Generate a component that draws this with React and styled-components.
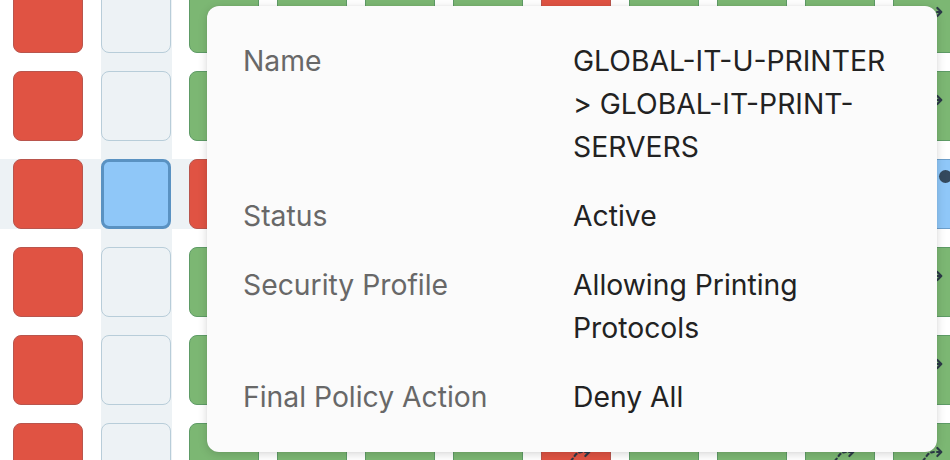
import React from 'react';
import styled, { createGlobalStyle } from 'styled-components';

const GlobalStyle = createGlobalStyle`
  html, body {
    margin: 0;
    padding: 0;
    background: #ffffff;
    overflow: hidden;
  }
  body {
    font-family: Inter, "Noto Sans", "Liberation Sans", sans-serif;
  }
`;

// r = deny, g = allow, e = empty, s = selected, b = highlighted target
// a trailing "+" means the cell carries a flow icon, "*" a marker dot
const matrix = [
  'r e g g g+ g+ r+ g+ g+ g+ g+',
  'r e g g g g r g g g g+',
  'r s r g g g r g g g b*',
  'r e g g g g r g g g g+',
  'r e g g g g r g g g g+',
  'r e g g g g r+ g g g+ g+',
];

const SELECTED_ROW = 2;
const SELECTED_COL = 1;

const details = [
  { label: 'Name', value: 'GLOBAL-IT-U-PRINTER > GLOBAL-IT-PRINT-SERVERS' },
  { label: 'Status', value: 'Active' },
  { label: 'Security Profile', value: 'Allowing Printing Protocols' },
  { label: 'Final Policy Action', value: 'Deny All' },
];

const palette = {
  r: { bg: '#e05343', border: '#b9554d', width: '1px' },
  g: { bg: '#7cb773', border: '#5e9b66', width: '1px' },
  e: { bg: '#edf2f5', border: '#b8cdd9', width: '1.5px' },
  s: { bg: '#8fc7f8', border: '#5a92c2', width: '3px' },
  b: { bg: '#8fc7f8', border: '#6d9fcb', width: '1px' },
};

function parseCell(code) {
  return {
    kind: code[0],
    icon: code.includes('+'),
    dot: code.includes('*'),
  };
}

function FlowArrow() {
  return (
    <svg width="32" height="32" viewBox="0 0 24 24" fill="none" stroke="currentColor"
      strokeWidth="1.6" strokeLinecap="round" strokeLinejoin="round">
      <path d="M3 21 L11 10.5 Q13 7.5 16.5 7.5 H21.5" strokeDasharray="2 2.4" />
      <path d="M19 4.5 l3 3 -3 3" />
    </svg>
  );
}

export default function App() {
  return (
    <Page>
      <GlobalStyle />
      <Board>
        {matrix.map((line, r) => (
          <Row key={r} $hi={r === SELECTED_ROW}>
            {line.split(' ').map((code, c) => {
              const cell = parseCell(code);
              return (
                <Slot key={c} $hi={c === SELECTED_COL}>
                  <Square $kind={cell.kind}>
                    {cell.icon && (
                      <FlowIcon>
                        <FlowArrow />
                      </FlowIcon>
                    )}
                    {cell.dot && <Dot />}
                  </Square>
                </Slot>
              );
            })}
          </Row>
        ))}
      </Board>
      <Tooltip>
        <DetailGrid>
          {details.map((d) => (
            <React.Fragment key={d.label}>
              <Label>{d.label}</Label>
              <Value>{d.value}</Value>
            </React.Fragment>
          ))}
        </DetailGrid>
      </Tooltip>
    </Page>
  );
}

const Page = styled.div`
  position: relative;
  width: 950px;
  height: 460px;
  overflow: hidden;
`;

const Board = styled.div`
  display: flex;
  flex-direction: column;
  margin-top: -26px;
`;

const Row = styled.div`
  display: flex;
  height: 88px;
  padding-left: 4px;
  background: ${(p) =>
    p.$hi
      ? 'linear-gradient(to bottom, transparent 9px, #edf2f5 9px, #edf2f5 79px, transparent 79px)'
      : 'transparent'};
`;

const Slot = styled.div`
  flex: 0 0 88px;
  height: 88px;
  box-sizing: border-box;
  padding: 9px;
  background: ${(p) =>
    p.$hi
      ? 'linear-gradient(to right, transparent 9px, #edf2f5 9px, #edf2f5 80px, transparent 80px)'
      : 'transparent'};
`;

const Square = styled.div`
  position: relative;
  width: 70px;
  height: 70px;
  box-sizing: border-box;
  border-radius: 8px;
  overflow: hidden;
  display: flex;
  align-items: center;
  justify-content: center;
  background: ${(p) => palette[p.$kind].bg};
  border: ${(p) => palette[p.$kind].width} solid ${(p) => palette[p.$kind].border};
`;

const FlowIcon = styled.span`
  display: flex;
  color: #2c3a47;
`;

const Dot = styled.span`
  position: absolute;
  top: 10px;
  left: 45px;
  width: 13px;
  height: 13px;
  border-radius: 50%;
  background: #34495e;
`;

const Tooltip = styled.div`
  position: absolute;
  top: 6px;
  left: 207px;
  width: 730px;
  box-sizing: border-box;
  padding: 34px 36px 33px;
  background: #fbfbfb;
  border-radius: 12px;
  box-shadow: 0 2px 10px rgba(0, 0, 0, 0.16), 0 0 1px rgba(0, 0, 0, 0.12);
`;

const DetailGrid = styled.div`
  display: grid;
  grid-template-columns: 330px 1fr;
  row-gap: 26px;
  font-size: 28.3px;
  line-height: 43px;
`;

const Label = styled.div`
  color: #686868;
`;

const Value = styled.div`
  color: #222222;
`;
